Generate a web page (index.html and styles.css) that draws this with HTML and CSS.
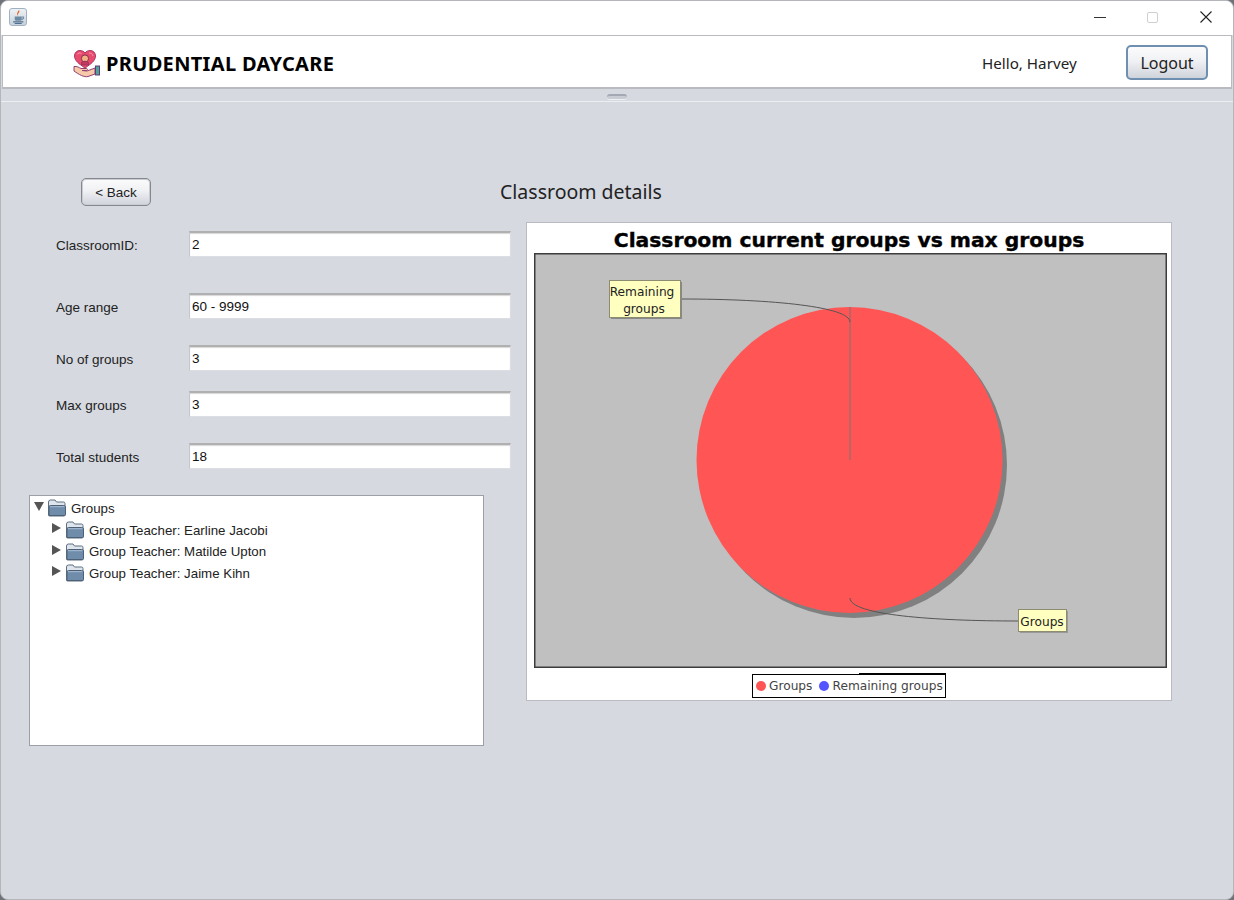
FILE: index.html
```html
<!DOCTYPE html>
<html lang="en">
<head>
<meta charset="UTF-8">
<meta name="viewport" content="width=device-width, initial-scale=1.0">
<title>Prudential Daycare</title>
<link rel="stylesheet" href="styles.css">
</head>
<body>
<svg class="defs" width="0" height="0">
    <symbol id="folder" viewBox="0 0 18 18">
        <path d="M0.500 16V3Q0.500 1 2.500 1H7l1.500 2H15.500q1.500 0 1.500 1.500V16q0 1-1 1H1.500q-1 0-1-1z" fill="#dfe5ec" stroke="#5f6f82"/>
        <path d="M1 16.500V8Q1 6.500 2.500 6.500h13q2 0 2 1.500V15.500q0 1-1 1z" fill="#6f8cab" stroke="#4d6075"/>
        <path d="M2 7.700h14.500" stroke="#a9bed4" fill="none"/>
    </symbol>
</svg>
<div class="window">
    <!-- Title bar -->
    <div class="titlebar">
        <div class="app-icon">
            <svg width="13" height="14" viewBox="0 0 12 13">
                <path d="M6.500 0C8 2.500 4.500 3 5.800 5.500C3.800 4 5 2 6.500 0z" fill="#e0662c"/>
                <path d="M2.500 6h6.500v2.500q0 1.500-1.500 1.500h-3.500q-1.500 0-1.500-1.500z" fill="#6d8aa3"/>
                <path d="M9 6.500h1.500q1 0.800-1.500 2.500" fill="none" stroke="#6d8aa3"/>
                <path d="M1 11h9.500M2.500 12.500h6.500" stroke="#4f7090" fill="none"/>
            </svg>
        </div>
        <div class="win-controls">
            <span class="win-min"></span>
            <span class="win-max"></span>
            <svg class="win-close" width="12" height="12" viewBox="0 0 12 12">
                <path d="M0.500 0.500L11.500 11.500M11.500 0.500L0.500 11.500" stroke="#222" stroke-width="1.100"/>
            </svg>
        </div>
    </div>

    <!-- App header -->
    <div class="header">
        <div class="brand">
            <svg class="logo" width="28" height="28" viewBox="0 0 28 28">
                <path d="M12 18C6 14 1.500 10.500 1.500 6C1.500 2.500 4 0.500 7 0.500C9 0.500 11 1.500 12 3C13 1.500 15 0.500 17 0.500C20 0.500 22.500 2.500 22.500 6C22.500 10.500 18 14 12 18z" fill="#ea4a6e" stroke="#a83a62"/>
                <path d="M4 4.500C5 3 7 2.500 8.500 3.500M16 3C18 3 20 4 20 6" stroke="#f59ab0" fill="none"/>
                <circle cx="12" cy="8.500" r="3.600" fill="#f4b183" stroke="#7d3050"/>
                <path d="M8.500 12.500Q12 9.500 15.500 12.500V15H8.500z" fill="#c23a60" stroke="#7d3050" stroke-width="0.600"/>
                <path d="M1 16.500C4 16 6 17.500 8 18.500H13C15 18.500 15 20.500 13 20.500H9L14 21L22 18V24L15 26.500C11 27.500 6 24.500 1 21z" fill="#f8c9a8" stroke="#8f3e74"/>
                <rect x="22.500" y="16" width="4" height="9" fill="#4fa39a" stroke="#5f3e74"/>
            </svg>
            <span class="brand-name">PRUDENTIAL DAYCARE</span>
        </div>
        <span class="greeting">Hello, Harvey</span>
        <button class="btn btn-logout">Logout</button>
    </div>

    <!-- Split pane divider -->
    <div class="divider"><span class="grip"></span></div>

    <div class="content">
        <div class="top-row">
            <button class="btn btn-back">&lt; Back</button>
            <h2 class="page-title">Classroom details</h2>
        </div>

        <div class="columns">
            <div class="left-col">
                <div class="form-row">
                    <label for="classroomId">ClassroomID:</label>
                    <input type="text" id="classroomId" value="2">
                </div>
                <div class="form-row row-lg">
                    <label for="ageRange">Age range</label>
                    <input type="text" id="ageRange" value="60 - 9999">
                </div>
                <div class="form-row row-md">
                    <label for="noGroups">No of groups</label>
                    <input type="text" id="noGroups" value="3">
                </div>
                <div class="form-row">
                    <label for="maxGroups">Max groups</label>
                    <input type="text" id="maxGroups" value="3">
                </div>
                <div class="form-row row-md">
                    <label for="totalStudents">Total students</label>
                    <input type="text" id="totalStudents" value="18">
                </div>

                <div class="tree">
                    <div class="tree-row tree-root">
                        <span class="arrow-open"></span>
                        <svg class="folder" width="18" height="18"><use href="#folder"/></svg>
                        <span>Groups</span>
                    </div>
                    <div class="tree-row tree-child">
                        <span class="arrow-closed"></span>
                        <svg class="folder" width="18" height="18"><use href="#folder"/></svg>
                        <span>Group Teacher: Earline Jacobi</span>
                    </div>
                    <div class="tree-row tree-child">
                        <span class="arrow-closed"></span>
                        <svg class="folder" width="18" height="18"><use href="#folder"/></svg>
                        <span>Group Teacher: Matilde Upton</span>
                    </div>
                    <div class="tree-row tree-child">
                        <span class="arrow-closed"></span>
                        <svg class="folder" width="18" height="18"><use href="#folder"/></svg>
                        <span>Group Teacher: Jaime Kihn</span>
                    </div>
                </div>
            </div>

            <div class="chart">
                <div class="chart-title">Classroom current groups vs max groups</div>
                <svg class="plot" width="633" height="415" viewBox="0 0 633 415">
                    <rect x="0.750" y="0.750" width="631.500" height="413.500" fill="#c0c0c0" stroke="#3c3c3c" stroke-width="1.500"/>
                    <circle cx="320" cy="212" r="153" fill="#808080"/>
                    <circle cx="315.500" cy="207" r="153" fill="#ff5555"/>
                    <path d="M316 207V54" stroke="#777" fill="none"/>
                    <path d="M147 46C240 46 316 54 316 69" stroke="#555" fill="none"/>
                    <path d="M316 345C316 362 400 368 484 368" stroke="#555" fill="none"/>
                    <rect x="77" y="29" width="71" height="37" fill="#888"/>
                    <rect x="75.500" y="27.500" width="71" height="37" fill="#ffffc0" stroke="#8c8c70"/>
                    <text class="plot-label" x="108" y="43" text-anchor="middle">Remaining</text>
                    <text class="plot-label" x="110" y="60" text-anchor="middle">groups</text>
                    <rect x="486" y="358" width="48" height="22" fill="#999"/>
                    <rect x="484.500" y="356.500" width="48" height="22" fill="#ffffc0" stroke="#8c8c70"/>
                    <text class="plot-label" x="508" y="373" text-anchor="middle">Groups</text>
                </svg>
                <div class="legend">
                    <span class="dot dot-red"></span><span class="legend-text">Groups</span>
                    <span class="dot dot-blue"></span><span class="legend-text">Remaining groups</span>
                </div>
            </div>
        </div>
    </div>
</div>
</body>
</html>
```

FILE: styles.css
```css
* {
    box-sizing: border-box;
}
body {
    margin: 0;
    background-color: #6f7278;
    font-family: "Liberation Sans", Arial, sans-serif;
    overflow: hidden;
}
.defs {
    position: absolute;
}
.window {
    width: 1234px;
    height: 900px;
    background-color: #d6d9e0;
    border: 1px solid #b4b6ba;
    border-radius: 8px;
    overflow: hidden;
}
.titlebar {
    height: 34px;
    background: white;
    display: flex;
    align-items: center;
    justify-content: space-between;
    padding: 0 21px 2px 8px;
}
.app-icon {
    width: 18px;
    height: 18px;
    border: 1px solid #9fb2c4;
    border-radius: 3px;
    background: linear-gradient(#eef1f4, #c8d2dc);
    display: flex;
    align-items: center;
    justify-content: center;
}
.win-controls {
    display: flex;
    align-items: center;
}
.win-min {
    width: 12px;
    height: 1px;
    background: #333;
    margin-right: 41px;
}
.win-max {
    width: 11px;
    height: 11px;
    border: 1px solid #cfcfcf;
    border-radius: 2px;
    margin-right: 42px;
}
.header {
    height: 54px;
    margin: 0 1px 0 1px;
    padding-top: 2px;
    background: white;
    border: 1px solid #b9bbc0;
    border-bottom-width: 2px;
    display: flex;
    align-items: center;
}
.brand {
    display: flex;
    align-items: center;
    margin: 2px 0 0 70px;
    width: 909px;
}
.logo {
    margin-right: 5px;
}
.brand-name {
    font-family: "Noto Sans", "Open Sans", sans-serif;
    font-weight: 700;
    font-size: 20px;
    color: black;
    letter-spacing: 0.33px;
}
.greeting {
    font-family: "Noto Sans", "Open Sans", sans-serif;
    font-size: 15.200px;
    color: #222;
    width: 144px;
    margin-top: 1px;
}
.btn {
    font-family: "Liberation Sans", Arial, sans-serif;
    color: #222;
    cursor: pointer;
    background: linear-gradient(#fbfbfc, #f0f1f4 45%, #cfd3db);
    padding: 0;
}
.btn-logout {
    width: 82px;
    height: 35px;
    font-family: "Noto Sans", "Open Sans", sans-serif;
    font-size: 16px;
    border: 2px solid #6f8fb0;
    border-radius: 5px;
}
.divider {
    height: 13px;
    border-bottom: 1px solid #eceef1;
    display: flex;
    justify-content: center;
}
.grip {
    width: 20px;
    height: 6px;
    margin-top: 5px;
    border-top: 2px solid #a4a8b2;
    border-bottom: 1px solid #f0f1f4;
    border-radius: 3px;
    background: #c9ccd4;
}
.content {
    padding-top: 76px;
}
.top-row {
    display: flex;
    align-items: center;
    height: 28px;
    padding-left: 80px;
}
.btn-back {
    width: 70px;
    height: 28px;
    font-size: 13.500px;
    border: 1px solid #85888f;
    border-radius: 5px;
    box-shadow: inset 0 0 0 1px #c9ccd2;
}
.page-title {
    margin: -2px 0 0 349px;
    font-family: "Noto Sans", "Open Sans", sans-serif;
    font-weight: 400;
    font-size: 19.500px;
    color: #222;
}
.columns {
    display: flex;
    align-items: flex-start;
    margin-top: 16px;
}
.left-col {
    width: 525px;
    padding-top: 9px;
    flex-shrink: 0;
}
.form-row {
    display: flex;
    align-items: center;
    height: 26px;
    margin: 20px 0 0 55px;
}
.form-row:first-child {
    margin-top: 0;
}
.form-row.row-lg {
    margin-top: 36px;
}
.form-row.row-md {
    margin-top: 26px;
}
.form-row label {
    width: 133px;
    padding-top: 2px;
    font-size: 13.500px;
    color: #222;
}
.form-row input {
    width: 322px;
    height: 26px;
    padding: 0 0 0 2px;
    border: 1px solid #dcdee3;
    border-left-color: #c4c6cc;
    border-top: 2px solid #b0b0b0;
    box-shadow: inset 0 1px 1px #d8d8d8;
    background: white;
    font-family: "Liberation Sans", Arial, sans-serif;
    font-size: 13.500px;
    color: #111;
    outline: none;
}
.tree {
    width: 455px;
    height: 251px;
    margin: 26px 0 0 28px;
    background: white;
    border: 1px solid #9c9fa8;
    padding-top: 1px;
    font-size: 13.300px;
    color: #222;
}
.tree-row {
    display: flex;
    align-items: center;
    height: 21.500px;
    padding-left: 4px;
}
.tree-root {
    height: 22.500px;
}
.tree-child {
    padding-left: 22px;
}
.folder {
    margin-right: 5px;
}
.arrow-open {
    width: 0;
    height: 0;
    margin: -4px 4px 0 0;
    border-left: 5px solid transparent;
    border-right: 5px solid transparent;
    border-top: 9px solid #555;
}
.arrow-closed {
    width: 0;
    height: 0;
    margin: -4px 5px 0 0;
    border-top: 5px solid transparent;
    border-bottom: 5px solid transparent;
    border-left: 9px solid #555;
}
.chart {
    width: 646px;
    height: 479px;
    background: white;
    border: 1px solid #b9bbc0;
    display: flex;
    flex-direction: column;
    align-items: flex-start;
}
.chart-title {
    width: 100%;
    height: 30px;
    padding-top: 5px;
    line-height: 24px;
    text-align: center;
    font-family: "DejaVu Sans", sans-serif;
    font-weight: 700;
    font-size: 20.300px;
    -webkit-text-stroke: 0.4px black;
    color: black;
    white-space: nowrap;
}
.plot {
    margin-left: 7px;
    display: block;
}
.plot-label {
    font-family: "DejaVu Sans", sans-serif;
    font-size: 12.200px;
    fill: #222;
}
.legend {
    position: relative;
    display: flex;
    align-items: center;
    align-self: flex-start;
    width: 194px;
    height: 24px;
    margin: 6px 0 0 225px;
    border: 1px solid black;
    padding-left: 3px;
    background: white;
    font-family: "DejaVu Sans", sans-serif;
    font-size: 12.200px;
    color: #444;
    white-space: nowrap;
}
/* the chart legend's top edge doubles up on its right part */
.legend::before {
    content: "";
    position: absolute;
    top: -2px;
    right: -1px;
    width: 87px;
    height: 1px;
    background: black;
}
.legend-text {
    margin-right: 7px;
}
.dot {
    width: 10px;
    height: 10px;
    border-radius: 50%;
    flex-shrink: 0;
    margin-right: 3px;
}
.dot-red {
    background: #ff5555;
}
.dot-blue {
    background: #5555ff;
}
```
